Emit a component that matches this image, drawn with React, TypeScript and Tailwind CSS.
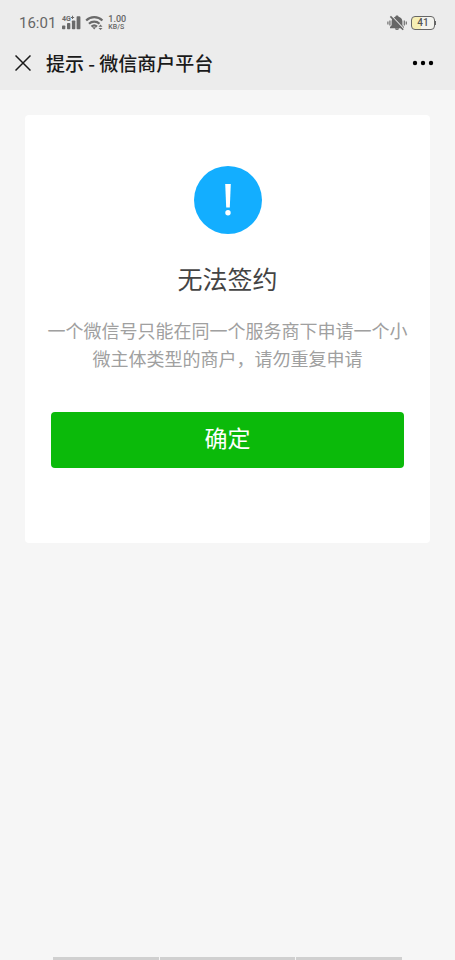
import React from 'react';

function SignalIcon() {
  return (
    <svg width="20" height="16" viewBox="0 0 20 16" fill="#6a6a6a" aria-hidden="true">
      <text x="1" y="6" fontSize="7" fontWeight="700" fontFamily="Roboto, sans-serif">4G</text>
      <path d="M11 0.800h1v1.100h1.100v1H12v1.100h-1V2.900H9.900v-1H11z" />
      <rect x="1" y="10.500" width="3.300" height="3.700" rx="0.800" />
      <rect x="6" y="8" width="3.300" height="6.200" rx="0.800" />
      <rect x="10.900" y="5.500" width="3.400" height="8.700" rx="0.800" />
      <rect x="15.600" y="1.200" width="3.800" height="13" rx="0.800" />
    </svg>
  );
}

function WifiIcon() {
  return (
    <svg width="19" height="16" viewBox="0 0 19 16" fill="none" stroke="#6a6a6a" strokeWidth="2.200" aria-hidden="true">
      <path d="M1.200 5.500C5.500 1.100 13 1.100 17.400 5.500" />
      <path d="M4 8.700c2.900-2.800 7.600-2.800 10.500 0" />
      <path d="M6.500 11.600c1.600-1.500 3.900-1.500 5.500 0" />
      <path d="M7.300 12.300h3.800l-1.900 2.200z" fill="#6a6a6a" stroke="none" />
      <path d="M13.500 11.700l2-2.200 2 2.200zM13.500 12.900l2 2.200 2-2.200z" fill="#6a6a6a" stroke="none" />
    </svg>
  );
}

function MutedBellIcon() {
  return (
    <svg width="20" height="16" viewBox="0 0 20 16" fill="none" aria-hidden="true">
      <path d="M10 0.500c-.9 0-1.500.5-1.600 1.200C5.900 2.300 4.600 4.300 4.600 6.500v3.700L3 12v1.200h14V12l-1.600-1.800V6.500c0-2.200-1.300-4.200-3.800-4.800C11.500 1 10.900 0.500 10 0.500zM7.800 13h4.400c0 1.300-.9 2-2.200 2s-2.200-.7-2.200-2z" fill="#666" />
      <path d="M4.800 1.200l12.400 13" stroke="#ececec" strokeWidth="1.200" />
      <path d="M3.400 1.400l12.800 13.400" stroke="#666" strokeWidth="1.600" />
      <path d="M0.900 6.600v2.800M2.900 5.600v4.800M17.300 5.600v4.800M19.300 6.600v2.800" stroke="#777" strokeWidth="1.300" />
    </svg>
  );
}

function Battery() {
  return (
    <div className="flex items-center" aria-label="41%">
      <div className="flex h-[14px] w-6 items-center justify-center rounded-[4px] border border-[#666] bg-linear-to-r from-[#f6eeb4] from-40% to-[#f3f3ee] to-40% font-[Roboto,sans-serif] text-[10px] leading-3 font-medium text-[#555]">
        41
      </div>
      <div className="h-1 w-px bg-[#666]" />
    </div>
  );
}

function StatusBar() {
  return (
    <div className="flex h-[46px] items-center justify-between pr-[19px] pl-[19px] font-[Roboto,sans-serif] text-[#666]">
      <div className="flex items-center gap-1">
        <span className="mr-px text-[15px] leading-4">16:01</span>
        <SignalIcon />
        <WifiIcon />
        <div className="font-medium">
          <div className="text-[9px] leading-[9px]">1.00</div>
          <div className="text-[7px] leading-[7px]">KB/S</div>
        </div>
      </div>
      <div className="flex items-center gap-1">
        <MutedBellIcon />
        <Battery />
      </div>
    </div>
  );
}

function NavBar() {
  return (
    <div className="flex h-11 items-start justify-between pr-[21px] pl-[15px]">
      <div className="flex h-[34px] items-center gap-[15px]">
        <button type="button" aria-label="关闭">
          <svg width="16" height="16" viewBox="0 0 16 16" stroke="#1a1a1a" strokeWidth="1.500" fill="none">
            <path d="M0.500 0.500l15 15M15.500 0.500l-15 15" />
          </svg>
        </button>
        <h1 className="text-[19px] leading-7 font-medium text-[#1a1a1a]">提示 - 微信商户平台</h1>
      </div>
      <button type="button" aria-label="更多" className="flex h-[34px] items-center">
        <svg width="22" height="6" viewBox="0 0 22 6" fill="#000">
          <circle cx="3" cy="3" r="2.200" />
          <circle cx="11" cy="3" r="2.200" />
          <circle cx="19" cy="3" r="2.200" />
        </svg>
      </button>
    </div>
  );
}

function NoticeIcon() {
  return (
    <svg width="68" height="68" viewBox="0 0 68 68" aria-hidden="true">
      <circle cx="34" cy="34" r="34" fill="#13aeff" />
      <path d="M31.200 18h5.600l-1 23.500h-3.600z" fill="#fff" />
      <circle cx="34" cy="46.700" r="2.700" fill="#fff" />
    </svg>
  );
}

export default function App() {
  return (
    <div className="flex min-h-screen flex-col bg-[#f6f6f6] font-['Noto_Sans_CJK_SC',sans-serif]">
      <header className="bg-[#ececec]">
        <StatusBar />
        <NavBar />
      </header>
      <main className="px-[25px] pt-[25px]">
        <section className="flex flex-col items-center rounded-[4px] bg-white pt-[51px] pb-[75px]">
          <NoticeIcon />
          <h2 className="mt-[26px] text-[25px] leading-9 font-normal text-[#444]">无法签约</h2>
          <p className="mt-5 px-5 text-center text-[18px] leading-7 font-normal text-[#a0a0a0]">
            一个微信号只能在同一个服务商下申请一个小微主体类型的商户，请勿重复申请
          </p>
          <div className="mt-10 w-full px-[26px]">
            <button type="button" className="block h-14 w-full rounded-[4px] bg-[#0bba0a] pb-1.5 text-[23px] leading-8 text-white">
              确定
            </button>
          </div>
        </section>
      </main>
      <footer className="mt-auto flex gap-px px-[53px]" aria-hidden="true">
        <div className="h-[3px] flex-[106] bg-[#d0d0d0]" />
        <div className="h-[3px] flex-[135] bg-[#d0d0d0]" />
        <div className="h-[3px] flex-[106] bg-[#d0d0d0]" />
      </footer>
    </div>
  );
}
